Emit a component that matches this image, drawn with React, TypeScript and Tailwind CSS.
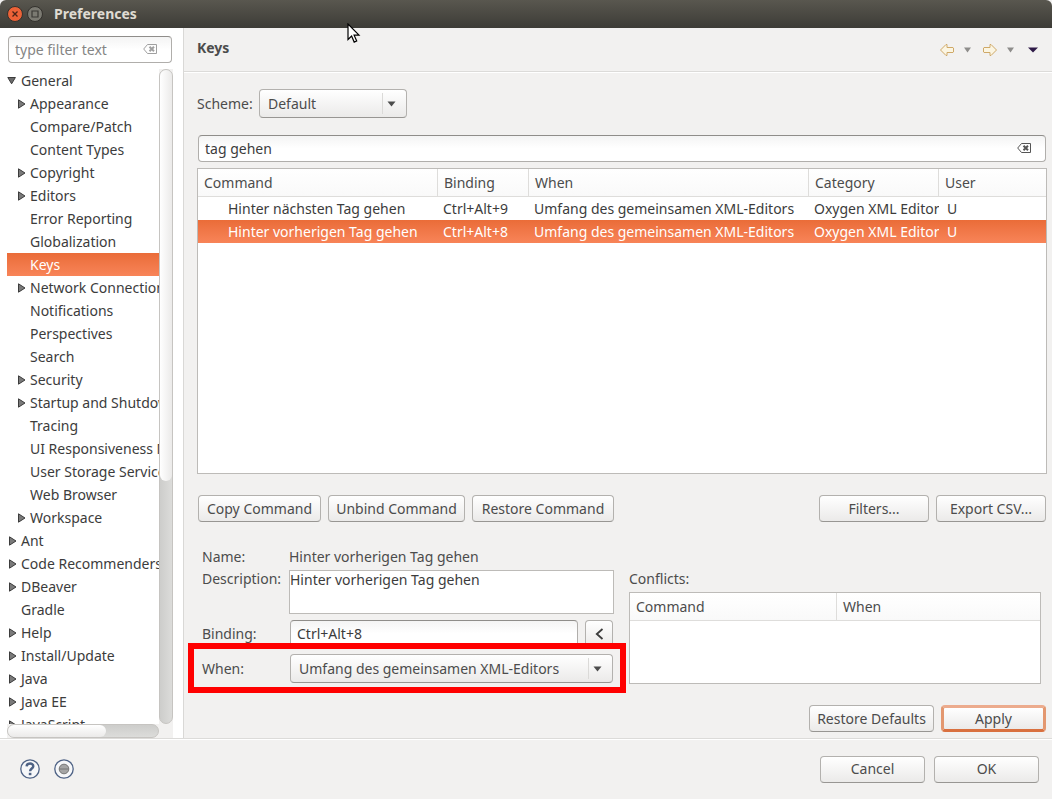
import { useState } from "react";
import type { ButtonHTMLAttributes, ReactNode } from "react";
import clsx from "clsx";

interface TreeNode {
  label: string;
  level: number;
  state?: "open" | "closed";
}

interface KeyBinding {
  command: string;
  binding: string;
  when: string;
  category: string;
  user: string;
}

const treeNodes: TreeNode[] = [
  { label: "General", level: 0, state: "open" },
  { label: "Appearance", level: 1, state: "closed" },
  { label: "Compare/Patch", level: 1 },
  { label: "Content Types", level: 1 },
  { label: "Copyright", level: 1, state: "closed" },
  { label: "Editors", level: 1, state: "closed" },
  { label: "Error Reporting", level: 1 },
  { label: "Globalization", level: 1 },
  { label: "Keys", level: 1 },
  { label: "Network Connections", level: 1, state: "closed" },
  { label: "Notifications", level: 1 },
  { label: "Perspectives", level: 1 },
  { label: "Search", level: 1 },
  { label: "Security", level: 1, state: "closed" },
  { label: "Startup and Shutdown", level: 1, state: "closed" },
  { label: "Tracing", level: 1 },
  { label: "UI Responsiveness Monitoring", level: 1 },
  { label: "User Storage Service", level: 1 },
  { label: "Web Browser", level: 1 },
  { label: "Workspace", level: 1, state: "closed" },
  { label: "Ant", level: 0, state: "closed" },
  { label: "Code Recommenders", level: 0, state: "closed" },
  { label: "DBeaver", level: 0, state: "closed" },
  { label: "Gradle", level: 0 },
  { label: "Help", level: 0, state: "closed" },
  { label: "Install/Update", level: 0, state: "closed" },
  { label: "Java", level: 0, state: "closed" },
  { label: "Java EE", level: 0, state: "closed" },
  { label: "JavaScript", level: 0, state: "closed" },
];

const bindings: KeyBinding[] = [
  {
    command: "Hinter nächsten Tag gehen",
    binding: "Ctrl+Alt+9",
    when: "Umfang des gemeinsamen XML-Editors",
    category: "Oxygen XML Editor",
    user: "U",
  },
  {
    command: "Hinter vorherigen Tag gehen",
    binding: "Ctrl+Alt+8",
    when: "Umfang des gemeinsamen XML-Editors",
    category: "Oxygen XML Editor",
    user: "U",
  },
];

const selectedRow = "bg-linear-to-b from-[#ea6c38] to-[#f88458] text-white";
const field =
  "h-[27px] w-full rounded border border-[#b0aeab] border-t-[#8f8d8a] bg-linear-to-b from-[#f4f4f4] to-white to-50% px-1.5 text-[#3c3c3c] outline-none";

function Button({ className, ...props }: ButtonHTMLAttributes<HTMLButtonElement>) {
  return (
    <button
      type="button"
      className={clsx(
        "h-[27px] shrink-0 rounded bg-linear-to-b from-white to-[#ebeae9] text-center whitespace-nowrap",
        className
      )}
      {...props}
    />
  );
}

const buttonBorder = "border border-[#b3b1ae] border-b-[#989693]";

function Select({ id, className, children }: { id: string; className: string; children: ReactNode }) {
  return (
    <div className={clsx("relative", className)}>
      <select
        id={id}
        className="h-[29px] w-full appearance-none rounded border border-[#b3b1ae] border-b-[#989693] bg-linear-to-b from-white to-[#ebeae9] pl-2 outline-none"
      >
        {children}
      </select>
      <div className="pointer-events-none absolute inset-y-1 right-0 flex w-[25px] items-center border-l border-[#dbdad8] pl-1">
        <svg width="9" height="6" viewBox="0 0 9 6">
          <path d="M0.5 0.5h8L4.5 5.5z" fill="#4c4c4c" />
        </svg>
      </div>
    </div>
  );
}

function ClearIcon({ color }: { color: string }) {
  return (
    <svg width="15" height="11" viewBox="0 0 15 11" fill="none" stroke={color}>
      <path d="M4.5 0.5h9v9h-9L0.7 5z" />
      <path d="M6.5 2.8l4.5 4.4M11 2.8L6.5 7.2" strokeWidth="2" />
    </svg>
  );
}

function Expander({ state }: { state?: "open" | "closed" }) {
  return (
    <svg width="12" height="10" viewBox="0 0 12 10" className="shrink-0">
      {state === "open" && <path d="M0.8 1.5h7.6L4.6 7.8z" fill="#6b6b6b" stroke="#3c3c3c" />}
      {state === "closed" && <path d="M2.5 0.8v8.4L9 5z" fill="#7a7a7a" stroke="#3c3c3c" />}
    </svg>
  );
}

function NavArrow({ back, label }: { back?: boolean; label: string }) {
  return (
    <button type="button" aria-label={label}>
      <svg width="16" height="14" viewBox="0 0 16 14" className={back ? "" : "-scale-x-100"}>
        <path
          d="M1.5 7L7 1.5h1v3h6l0.5 0.5v4l-0.5 0.5H8v3H7z"
          fill="#fbf5e2"
          stroke="#cfa968"
          strokeLinejoin="round"
        />
      </svg>
    </button>
  );
}

function MenuArrow({ label, dark }: { label: string; dark?: boolean }) {
  return (
    <button type="button" aria-label={label}>
      <svg width={dark ? 10 : 7} height="6" viewBox="0 0 10 6" preserveAspectRatio="none">
        <path d="M0 0.5h10L5 5.5z" fill={dark ? "#2e1a47" : "#8e8d8b"} />
      </svg>
    </button>
  );
}

function TitleBar() {
  return (
    <header className="flex h-7 shrink-0 items-center rounded-t-md bg-linear-to-b from-[#59574f] to-[#3d3c37] pl-[7px]">
      <button type="button" aria-label="Close window">
        <svg width="16" height="16" viewBox="0 0 16 16">
          <circle cx="8" cy="8" r="7.5" fill="#ec6237" stroke="#33312d" />
          <path d="M5.5 5.5l5 5M10.5 5.5l-5 5" stroke="#4a2417" strokeWidth="1.3" />
        </svg>
      </button>
      <button type="button" aria-label="Maximize window" className="ml-1">
        <svg width="16" height="16" viewBox="0 0 16 16">
          <circle cx="8" cy="8" r="7.5" fill="#7b7a72" stroke="#33312d" />
          <path d="M5 5h6v6H5z" fill="none" stroke="#3a3935" strokeWidth="1.2" />
        </svg>
      </button>
      <h1 className="ml-[11px] font-bold text-[#dfdbd2]">Preferences</h1>
    </header>
  );
}

function Sidebar() {
  const [selected, setSelected] = useState("Keys");

  return (
    <aside className="flex w-46 shrink-0 flex-col border-r border-[#d9d8d6] bg-white pt-2 pl-[7px]">
      <div className="relative mr-[11px] ml-px">
        <input
          type="text"
          aria-label="Filter preferences"
          placeholder="type filter text"
          className={clsx(field, "placeholder:text-[#858585]")}
        />
        <button type="button" aria-label="Clear filter" className="absolute inset-y-0 right-3.5">
          <ClearIcon color="#a0a0a0" />
        </button>
      </div>
      <div className="mt-1.5 mr-2.5 flex min-h-0 flex-1 bg-[#f2f1f0]">
        <div className="flex min-w-0 flex-1 flex-col">
          <ul className="min-h-0 flex-1 overflow-hidden bg-white text-[#3c3c3c]">
            {treeNodes.map((node) => (
              <li key={node.label}>
                <button
                  type="button"
                  onClick={() => setSelected(node.label)}
                  className={clsx(
                    "flex h-[23px] w-full items-center gap-0.5 overflow-hidden whitespace-nowrap",
                    node.level === 1 && "pl-[9px]",
                    selected === node.label && selectedRow
                  )}
                >
                  <Expander state={node.state} />
                  {node.label}
                </button>
              </li>
            ))}
          </ul>
          <div className="h-3.5 rounded-full border border-[#c6c4c1] bg-linear-to-b from-[#cdcdcb] to-[#dcdcda]">
            <div className="h-3 w-[65%] rounded-full bg-linear-to-b from-white to-[#ebeae9]" />
          </div>
        </div>
        <div className="mb-3.5 w-3.5 rounded-full border border-[#c6c4c1] bg-linear-to-r from-[#cdcdcb] to-[#dcdcda]">
          <div className="h-[63%] rounded-full bg-linear-to-r from-white to-[#ebeae9]" />
        </div>
      </div>
    </aside>
  );
}

function BindingsTable() {
  const [active, setActive] = useState(1);

  return (
    <div className="mt-1.5 min-h-0 flex-1 overflow-hidden border border-[#bdbbb8] bg-white">
      <table className="w-full table-fixed border-separate border-spacing-0 text-left">
        <colgroup>
          <col className="w-60" />
          <col className="w-[91px]" />
          <col className="w-70" />
          <col className="w-[130px]" />
          <col />
        </colgroup>
        <thead>
          <tr className="h-7 bg-linear-to-b from-white to-[#f9f9f9]">
            {["Command", "Binding", "When", "Category", "User"].map((title) => (
              <th
                key={title}
                className="border-r border-b border-[#dedddb] pl-1.5 font-normal last:border-r-0"
              >
                {title}
              </th>
            ))}
          </tr>
        </thead>
        <tbody className="text-[#3c3c3c]">
          {bindings.map((row, index) => (
            <tr
              key={row.command}
              onClick={() => setActive(index)}
              className={clsx("h-[23px] whitespace-nowrap", active === index && selectedRow)}
            >
              <td className="overflow-hidden pl-[30px]">{row.command}</td>
              <td className="overflow-hidden pl-[5px]">{row.binding}</td>
              <td className="overflow-hidden pl-[5px]">{row.when}</td>
              <td className="overflow-hidden pl-[5px]">{row.category}</td>
              <td className="pl-2">{row.user}</td>
            </tr>
          ))}
        </tbody>
      </table>
    </div>
  );
}

function BindingDetails() {
  return (
    <div className="mt-[23px] flex gap-[15px] pr-1.5 pl-[5px]">
      <div className="w-[412px] shrink-0">
        <div className="flex h-[25px] items-start pt-0.5">
          <span className="w-[87px] shrink-0">Name:</span>
          <span>Hinter vorherigen Tag gehen</span>
        </div>
        <div className="flex">
          <label htmlFor="description" className="w-[87px] shrink-0 leading-[18px]">
            Description:
          </label>
          <textarea
            id="description"
            readOnly
            className="h-11 min-w-0 flex-1 resize-none border border-[#bdbbb8] bg-white leading-[18px] text-[#3c3c3c] outline-none"
            defaultValue="Hinter vorherigen Tag gehen"
          />
        </div>
        <div className="mt-1.5 flex items-center pr-px">
          <label htmlFor="binding" className="w-22 shrink-0">
            Binding:
          </label>
          <input id="binding" type="text" defaultValue="Ctrl+Alt+8" className={clsx(field, "min-w-0 flex-1")} />
          <Button
            aria-label="Add special key"
            className={clsx(buttonBorder, "ml-[7px] flex w-7 items-center justify-center")}
          >
            <svg width="9" height="12" viewBox="0 0 9 12">
              <path d="M7.5 1L1.8 6l5.7 5" fill="none" stroke="#3c3c3c" strokeWidth="1.8" />
            </svg>
          </Button>
        </div>
        <div className="relative mt-[7px] flex items-center pr-px">
          <label htmlFor="when" className="w-22 shrink-0">
            When:
          </label>
          <Select id="when" className="flex-1">
            <option>Umfang des gemeinsamen XML-Editors</option>
          </Select>
          {/* red highlight frame around the "When" row */}
          <div className="pointer-events-none absolute -top-[11px] -right-3 -bottom-2.5 -left-3.5 border-6 border-[#ff0000]" />
        </div>
      </div>
      <div className="flex min-w-0 flex-1 flex-col pt-[25px]">
        <span className="leading-[18px]">Conflicts:</span>
        <div className="mt-1 h-23 border border-[#bdbbb8] bg-white">
          <table
            className="w-full table-fixed border-separate border-spacing-0 text-left"
            aria-label="Conflicts"
          >
            <colgroup>
              <col className="w-[207px]" />
              <col />
            </colgroup>
            <thead>
              <tr className="h-7 bg-linear-to-b from-white to-[#f9f9f9]">
                <th className="border-r border-b border-[#dedddb] pl-1.5 font-normal">Command</th>
                <th className="border-b border-[#dedddb] pl-1.5 font-normal">When</th>
              </tr>
            </thead>
          </table>
        </div>
      </div>
    </div>
  );
}

export default function App() {
  return (
    <div className="flex h-screen flex-col overflow-hidden bg-[#f2f1f0] font-['Noto_Sans','Open_Sans',sans-serif] text-sm text-[#4c4c4c]">
      <TitleBar />
      <div className="flex min-h-0 flex-1">
        <Sidebar />
        <main className="flex min-w-0 flex-1 flex-col">
          <div className="flex h-11 shrink-0 items-center justify-between border-b border-[#dcdbd9] pr-3.5 pl-[13px] shadow-[0_1px_0_#fff]">
            <h2 className="pb-1 font-bold">Keys</h2>
            <div className="flex items-center pt-px">
              <NavArrow back label="Back" />
              <span className="ml-[9px] flex">
                <MenuArrow label="Back history" />
              </span>
              <span className="ml-[11px] flex">
                <NavArrow label="Forward" />
              </span>
              <span className="ml-[9px] flex">
                <MenuArrow label="Forward history" />
              </span>
              <span className="ml-3.5 flex">
                <MenuArrow label="View menu" dark />
              </span>
            </div>
          </div>
          <div className="flex min-h-0 flex-1 flex-col pt-[17px] pr-[5px] pb-1.5 pl-[13px]">
            <div className="flex items-center">
              <label htmlFor="scheme" className="w-[62px] shrink-0">
                Scheme:
              </label>
              <Select id="scheme" className="w-37">
                <option>Default</option>
              </Select>
            </div>
            <div className="relative mt-[17px] mr-px ml-px">
              <input type="text" aria-label="Filter commands" defaultValue="tag gehen" className={field} />
              <button type="button" aria-label="Clear search" className="absolute inset-y-0 right-3.5">
                <ClearIcon color="#555555" />
              </button>
            </div>
            <BindingsTable />
            <div className="mt-[21px] mr-px ml-px flex gap-[7px]">
              <Button className={clsx(buttonBorder, "w-[123px]")}>Copy Command</Button>
              <Button className={clsx(buttonBorder, "w-[137px]")}>Unbind Command</Button>
              <Button className={clsx(buttonBorder, "w-[142px]")}>Restore Command</Button>
              <Button className={clsx(buttonBorder, "ml-auto w-[110px]")}>Filters...</Button>
              <Button className={clsx(buttonBorder, "w-[110px]")}>Export CSV...</Button>
            </div>
            <BindingDetails />
            <div className="mt-[21px] mr-px flex justify-end gap-[7px]">
              <Button className={clsx(buttonBorder, "w-[125px]")}>Restore Defaults</Button>
              <Button className="w-[105px] border-3 border-[#e3976f] border-t-[#ecab8d] border-b-[#d9703f]">
                Apply
              </Button>
            </div>
          </div>
        </main>
      </div>
      <footer className="flex h-[61px] shrink-0 items-center border-t border-[#dcdbd9] pr-[13px] pl-5 shadow-[inset_0_1px_0_#fff]">
        <button type="button" aria-label="Help">
          <svg width="20" height="20" viewBox="0 0 20 20" fill="none">
            <circle cx="10" cy="10" r="9.2" fill="#f6f7f9" stroke="#4e6285" strokeWidth="1.3" />
            <path d="M6.6 7.4C6.8 3.6 13.4 3.7 13.3 7.2c0 2.2-3.2 2.5-3.2 5" stroke="#4e6285" strokeWidth="2.4" />
            <path d="M8.8 13.8h2.6v2.4H8.8z" fill="#4e6285" />
          </svg>
        </button>
        <button type="button" aria-label="Record preferences" className="ml-3.5">
          <svg width="20" height="20" viewBox="0 0 20 20">
            <circle cx="10" cy="10" r="9.2" fill="#f6f7f9" stroke="#4e6285" strokeWidth="1.3" />
            <circle cx="10" cy="10" r="4.8" fill="#a5a5a5" stroke="#777777" />
            <path d="M5.5 10h9" stroke="#777777" />
          </svg>
        </button>
        <Button className={clsx(buttonBorder, "ml-auto w-[105px]")}>Cancel</Button>
        <Button className={clsx(buttonBorder, "ml-[9px] w-[105px]")}>OK</Button>
      </footer>
      {/* mouse pointer */}
      <svg
        className="pointer-events-none absolute top-[23px] left-[347px]"
        width="14"
        height="21"
        viewBox="0 0 14 21"
      >
        <path
          d="M1 1v15.5l3.6-3.4 2.6 6 2.5-1.1-2.6-5.8h4.9z"
          fill="#ffffff"
          stroke="#000000"
          strokeWidth="1.2"
        />
      </svg>
    </div>
  );
}
